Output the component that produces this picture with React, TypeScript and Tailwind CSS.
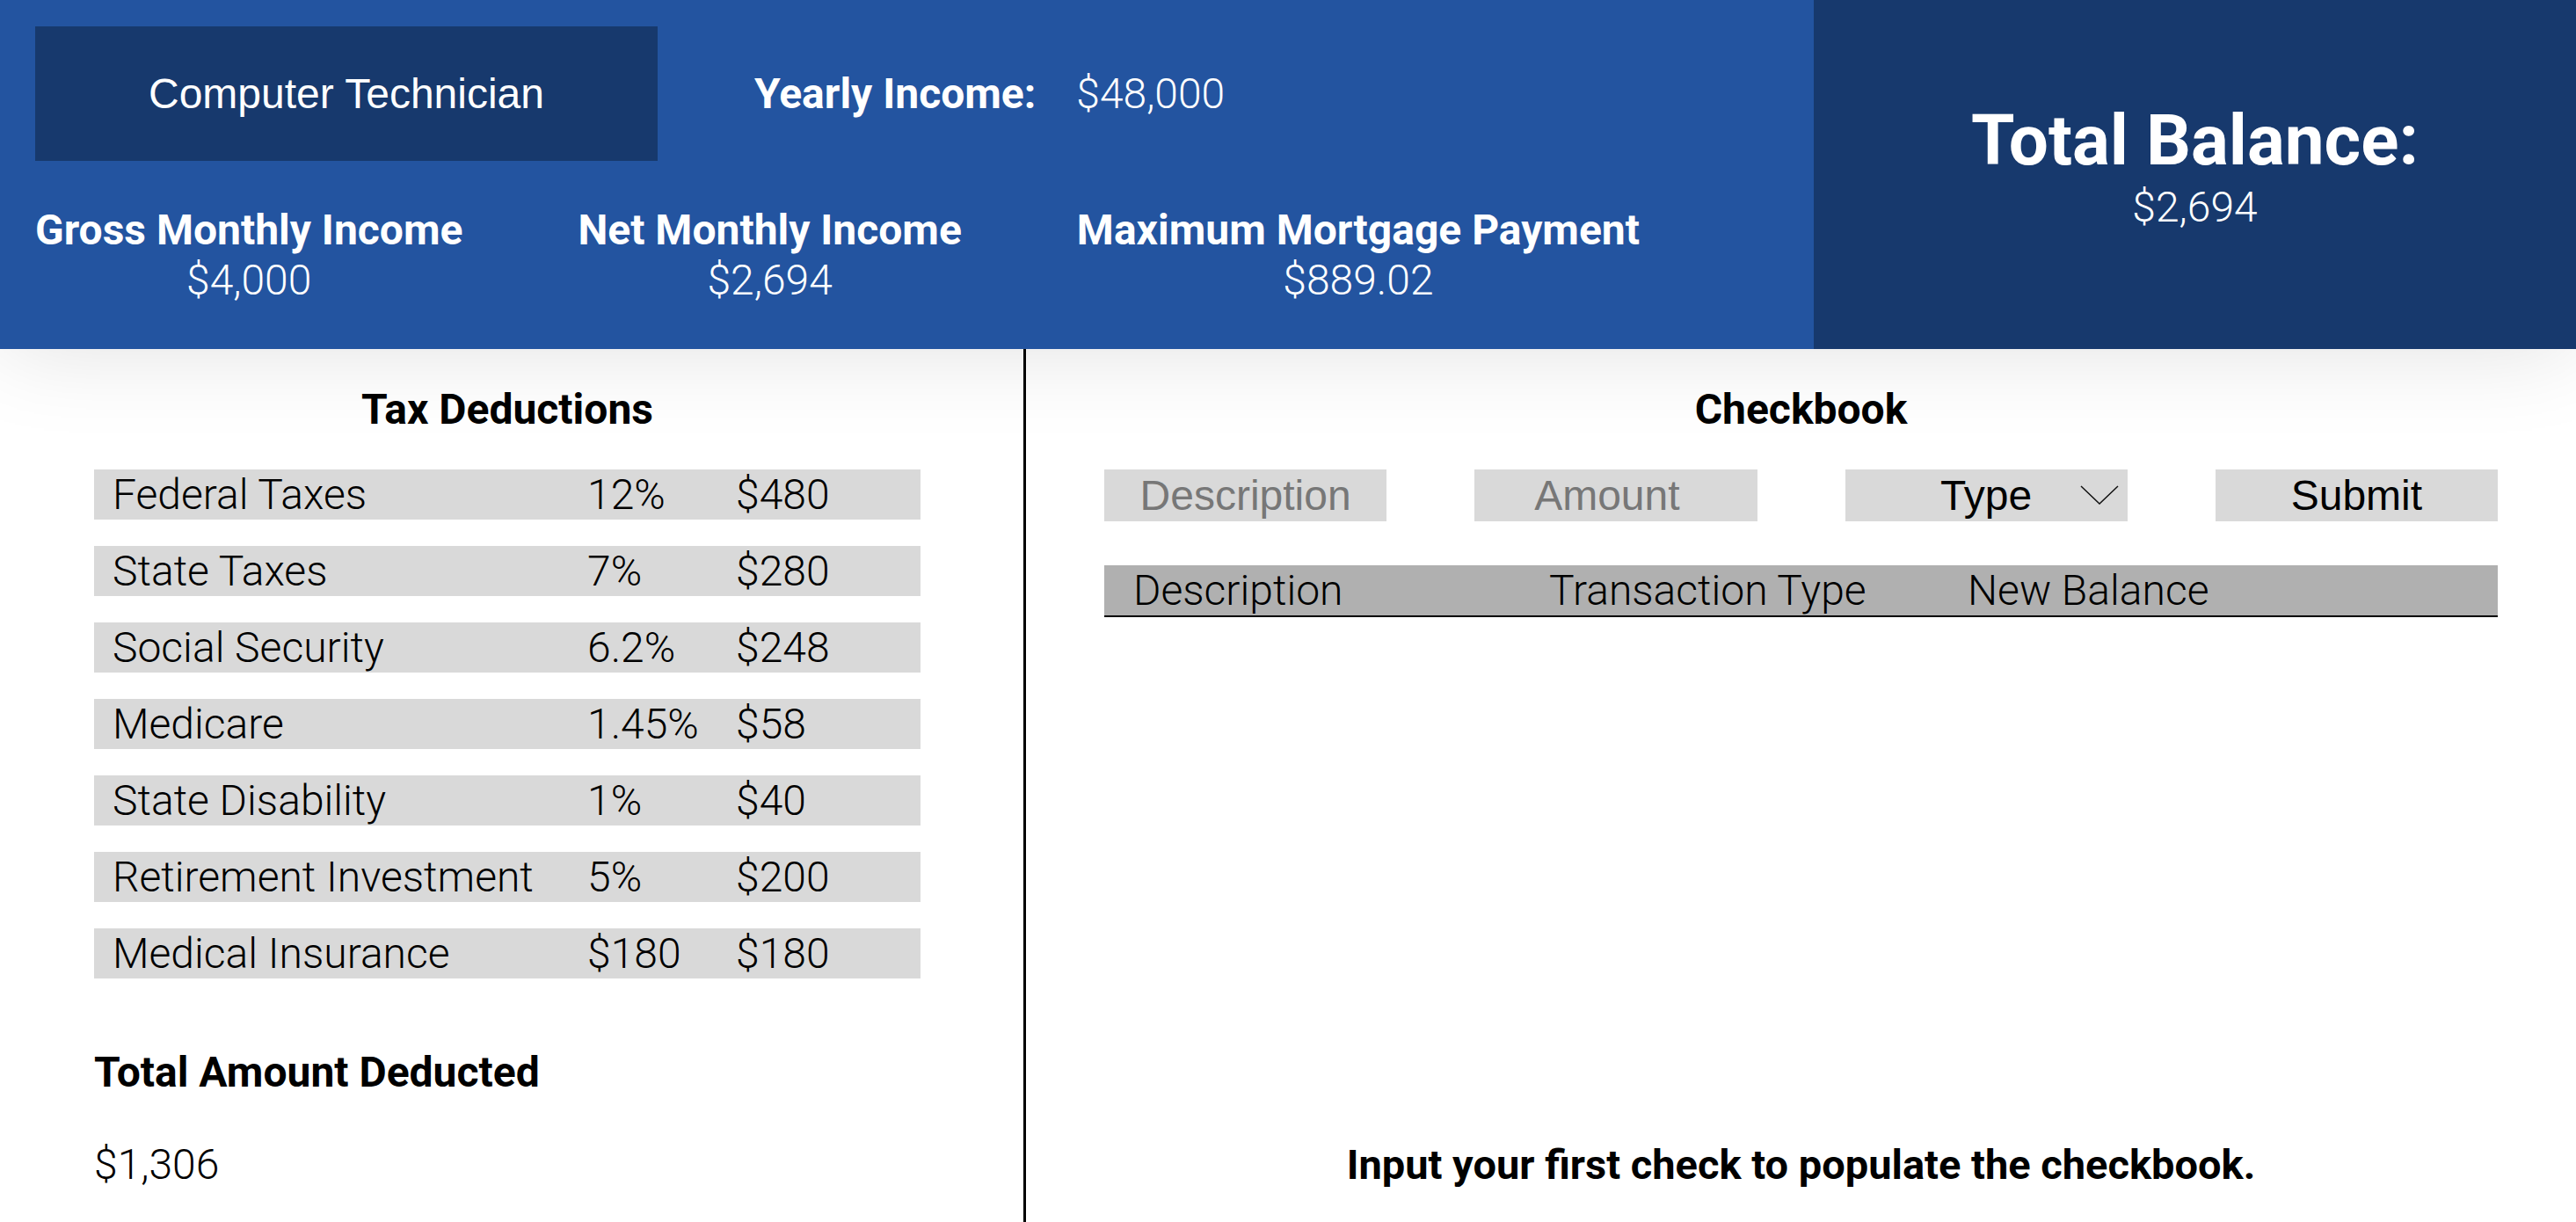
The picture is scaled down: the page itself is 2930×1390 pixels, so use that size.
import { FC } from 'react'

const deductions = [
	['Federal Taxes', '12%', '$480'],
	['State Taxes', '7%', '$280'],
	['Social Security', '6.2%', '$248'],
	['Medicare', '1.45%', '$58'],
	['State Disability', '1%', '$40'],
	['Retirement Investment', '5%', '$200'],
	['Medical Insurance', '$180', '$180'],
]

const stats = [
	['Gross Monthly Income', '$4,000'],
	['Net Monthly Income', '$2,694'],
	['Maximum Mortgage Payment', '$889.02'],
]

const App: FC = () => {
	return (
		<div className="flex h-[1390px] w-[2930px] flex-col overflow-hidden bg-white font-['Roboto',sans-serif] text-black">
			<header className="relative z-10 flex h-[397px] shrink-0 bg-[#2354a0] text-white shadow-[0_0_100px_rgba(0,0,0,0.12)]">
				<div className="flex-1 pl-[40px] pt-[30px]">
					<div className="flex items-center">
						<div className="flex h-[153px] w-[708px] items-center justify-center bg-[#17396d] font-['Liberation_Sans',sans-serif] text-[48px]">
							Computer Technician
						</div>
						<span className="ml-[110px] text-[48px] font-bold leading-[57px]">Yearly Income:</span>
						<span className="ml-[46px] text-[48px] font-light leading-[57px]">$48,000</span>
					</div>
					<div className="mt-[50px] flex gap-[131px]">
						{stats.map(([label, value]) => (
							<div key={label} className="flex flex-col items-center text-[48px] leading-[57px]">
								<span className="font-bold">{label}</span>
								<span className="font-light">{value}</span>
							</div>
						))}
					</div>
				</div>
				<div className="flex w-[867px] flex-col items-center justify-center bg-[#17396d] pb-[20px]">
					<div className="text-[80px] font-bold leading-[94px]">Total Balance:</div>
					<div className="text-[48px] font-light leading-[57px]">$2,694</div>
				</div>
			</header>

			<main className="flex flex-1">
				<section className="w-[1164px] pl-[107px] pt-[42px]">
					<div className="w-[940px]">
						<h2 className="text-center text-[48px] font-bold leading-[54px]">Tax Deductions</h2>
						<div className="mt-[41px] flex flex-col gap-[30px]">
							{deductions.map(([label, pct, amount]) => (
								<div key={label} className="flex h-[57px] items-center bg-[#d9d9d9] pl-[21px] text-[48px] font-light">
									<span className="w-[540px]">{label}</span>
									<span className="w-[169px]">{pct}</span>
									<span>{amount}</span>
								</div>
							))}
						</div>
						<h3 className="mt-[79px] text-[48px] font-bold leading-[55px]">Total Amount Deducted</h3>
						<p className="mt-[51px] text-[48px] font-light leading-[54px]">$1,306</p>
					</div>
				</section>

				<div className="w-[3px] bg-black" />

				<section className="flex flex-1 flex-col px-[89px] pb-[38px] pt-[42px]">
					<h2 className="text-center text-[48px] font-bold leading-[54px]">Checkbook</h2>
					<div className="mt-[41px] grid grid-cols-4 gap-[100px] font-['Liberation_Sans',sans-serif] text-[48px]">
						<input
							placeholder="Description"
							className="h-[59px] w-full min-w-0 bg-[#d9d9d9] text-center outline-none placeholder:text-[#777]"
						/>
						<input
							placeholder="Amount"
							className="h-[59px] w-full min-w-0 bg-[#d9d9d9] pr-[20px] text-center outline-none placeholder:text-[#777]"
						/>
						<button className="relative flex h-[59px] items-center justify-center bg-[#d9d9d9]">
							Type
							<svg viewBox="0 0 44 22" className="absolute right-[10px] top-[18px] h-[22px] w-[44px]" fill="none" stroke="#111" strokeWidth="1.5">
								<path d="M1 1 L22 21 L43 1" />
							</svg>
						</button>
						<button className="flex h-[59px] items-center justify-center bg-[#d9d9d9]">Submit</button>
					</div>
					<div className="mt-[50px] flex h-[59px] items-center border-b-2 border-black bg-[#b0b0b0] pl-[33px] text-[48px] font-light">
						<span className="w-[473px]">Description</span>
						<span className="w-[476px]">Transaction Type</span>
						<span>New Balance</span>
					</div>
					<p className="mt-auto text-center text-[47px] font-bold leading-[54px]">
						Input your first check to populate the checkbook.
					</p>
				</section>
			</main>
		</div>
	)
}

export default App
